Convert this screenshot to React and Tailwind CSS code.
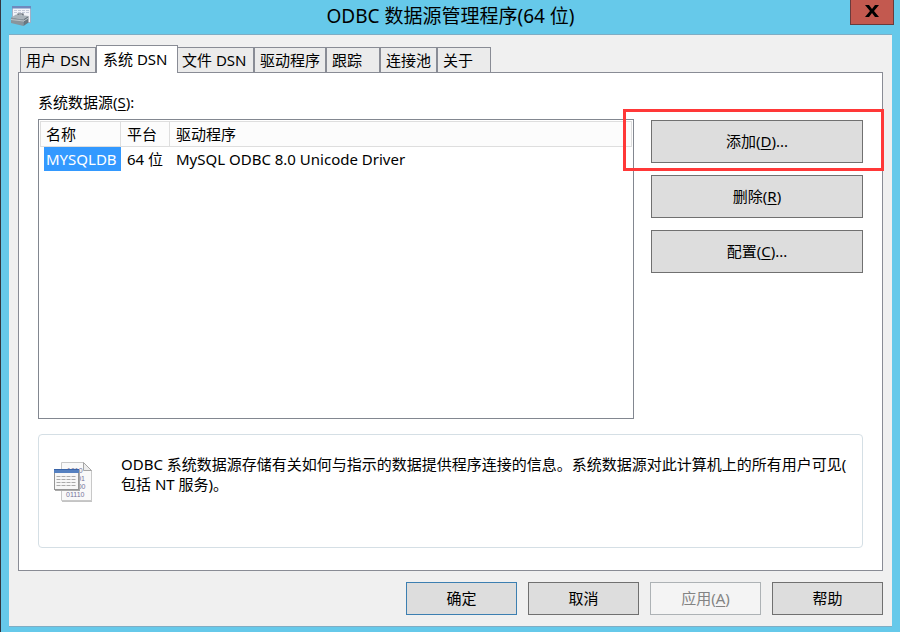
import { Fragment, useState } from "react";

const tabs = [
  { label: "用户 DSN", width: "w-[76px]" },
  { label: "系统 DSN", width: "w-[82px]" },
  { label: "文件 DSN", width: "w-[78px]" },
  { label: "驱动程序", width: "w-[72px]" },
  { label: "跟踪", width: "w-[54px]" },
  { label: "连接池", width: "w-[57px]" },
  { label: "关于", width: "w-[54px]" },
];

const sources = [
  { name: "MYSQLDB", platform: "64 位", driver: "MySQL ODBC 8.0 Unicode Driver" },
];

function ToolboxIcon() {
  return (
    <svg width="22" height="22" viewBox="0 0 22 22" aria-hidden="true">
      <rect x="1.500" y="1.500" width="18" height="16" fill="#f1f3f8" stroke="#9fb0c8" />
      <rect x="1" y="1" width="19" height="2.500" fill="#6f89bd" />
      <path d="M3 5.500h15M3 7.500h15" stroke="#c3cad8" strokeDasharray="3 1" />
      <path d="M7 11V9h5v2" fill="none" stroke="#4b555e" strokeWidth="1.2" />
      <path d="M0 12.500l5-3 12.500 1.500-5 3z" fill="#a9b3ba" />
      <path d="M0 12.500l12.500 1.500v7L0 18z" fill="#89949c" />
      <path d="M12.500 14l5-3v6.500l-5 3.500z" fill="#6a767f" />
      <path d="M0 14.500l12.500 1.500 5-3" fill="none" stroke="#bcc4c9" />
    </svg>
  );
}

function DataFileIcon() {
  return (
    <svg width="40" height="42" viewBox="0 0 40 42" aria-hidden="true" className="shrink-0">
      <path d="M8 2h22l8 8v31H8z" fill="#c4c4c4" />
      <path d="M7.500 1.500h22l8 8v30h-30z" fill="#f9f9f9" stroke="#c8c8c8" />
      <path d="M29.500 1.500v8h8z" fill="#ececec" stroke="#a5a5a5" />
      <g fontFamily="Liberation Sans, sans-serif" fontSize="7" fill="#77739a">
        <text x="13" y="12">1010</text>
        <text x="12" y="20">01101</text>
        <text x="12" y="28">10100</text>
        <text x="12" y="36">01110</text>
      </g>
      <rect x="1" y="9" width="25" height="21" fill="#a9a9a9" />
      <rect x="0.500" y="8.500" width="24" height="20" fill="#f7f7f7" stroke="#959595" />
      <rect x="0" y="8" width="25" height="4" fill="#5580c0" />
      <path d="M0 8.500h25" stroke="#3a64a8" />
      <path
        d="M2.500 15.500h20M2.500 18.500h20M2.500 21.500h20M2.500 24.500h20"
        stroke="#aaa"
        strokeDasharray="4 1"
      />
    </svg>
  );
}

function CloseIcon() {
  return (
    <svg width="14" height="12" viewBox="0 0 14 12" aria-hidden="true">
      <path d="M0 0h4l3 4 3-4h4L9 6l5 6h-4L7 8l-3 4H0l5-6z" fill="#000" />
    </svg>
  );
}

function Caption({ text, accessKey, suffix = "" }) {
  return (
    <Fragment>
      {text}
      {accessKey && (
        <>
          (<span className="underline underline-offset-2">{accessKey}</span>){suffix}
        </>
      )}
    </Fragment>
  );
}

function SideButton(props) {
  return (
    <button className="block h-[43px] w-full border border-[#707070] bg-[#dddddd] pb-0.5">
      <Caption {...props} />
    </button>
  );
}

export default function App() {
  const [active, setActive] = useState(1);

  return (
    <div className="flex min-h-screen flex-col border-l border-[#33363f] bg-[#66c9ea] font-['Noto_Sans','Noto_Sans_CJK_SC',sans-serif] text-[15px] leading-5 text-black">
      <header className="grid h-[34px] grid-cols-[1fr_auto_1fr]">
        <div className="pt-[5px] pl-[10px]">
          <ToolboxIcon />
        </div>
        <h1 className="text-[19px] leading-8">ODBC 数据源管理程序(64 位)</h1>
        <button
          aria-label="关闭"
          className="mr-1.5 flex h-[25px] w-11 items-center justify-center justify-self-end border border-t-0 border-[#693b3c] bg-[#c3594f] pb-0.5"
        >
          <CloseIcon />
        </button>
      </header>

      <main className="mr-2 mb-[5px] ml-2 flex flex-1 flex-col border-y border-[#7fadc4] bg-[#f0f0f0] px-[9px] pt-[10px] pb-[11px]">
        <div role="tablist" className="flex items-end pl-0.5">
          {tabs.map((tab, i) => (
            <button
              key={tab.label}
              role="tab"
              aria-selected={i === active}
              onClick={() => setActive(i)}
              className={`${tab.width} border border-b-0 border-[#898c95] text-left whitespace-nowrap ${
                i === active
                  ? "relative z-10 -mr-0.5 -mb-px h-[28px] bg-white pb-0.5 pl-1.5"
                  : "h-[25px] bg-[#ebebeb] pl-[5px]"
              }`}
            >
              {tab.label}
            </button>
          ))}
        </div>

        <section
          role="tabpanel"
          className="flex flex-1 flex-col border border-[#898c95] bg-white px-[19px] pt-[19px] pb-[22px]"
        >
          <h2 id="sources-label">
            <Caption text="系统数据源" accessKey="S" />:
          </h2>
          <div className="mt-[7px] flex flex-1 gap-[17px]">
            <div className="min-h-48 flex-1 border border-[#828790] p-px">
              <table
                aria-labelledby="sources-label"
                className="w-full table-fixed border-separate border-spacing-0 text-left"
              >
                <thead>
                  <tr className="h-[26px] bg-[#fcfcfc]">
                    <th className="w-[81px] border border-[#dedede] pl-[5px] font-normal">名称</th>
                    <th className="w-[49px] border-y border-r border-[#dedede] pl-1.5 font-normal">平台</th>
                    <th className="border-y border-r border-[#dedede] pl-1.5 font-normal">驱动程序</th>
                  </tr>
                </thead>
                <tbody>
                  {sources.map((s) => (
                    <tr key={s.name} className="h-6 whitespace-nowrap">
                      <td className="pl-1">
                        <div className="h-6 bg-[#3399ff] pl-0.5 leading-6 text-white">{s.name}</div>
                      </td>
                      <td className="pl-1.5">{s.platform}</td>
                      <td className="pl-1.5">{s.driver}</td>
                    </tr>
                  ))}
                </tbody>
              </table>
            </div>
            <div className="flex w-[212px] flex-col gap-3 pt-px">
              <div className="relative">
                <SideButton text="添加" accessKey="D" suffix="..." />
                <div className="pointer-events-none absolute -top-[11px] -right-[21px] -bottom-2 -left-7 border-[3px] border-[#ff3838]" />
              </div>
              <SideButton text="删除" accessKey="R" />
              <SideButton text="配置" accessKey="C" suffix="..." />
            </div>
          </div>

          <div className="mt-[15px] flex min-h-[114px] gap-[27px] rounded border border-[#d5dfe5] pt-[19px] pl-[15px]">
            <div className="pt-[7px]">
              <DataFileIcon />
            </div>
            <p className="whitespace-nowrap">
              ODBC 系统数据源存储有关如何与指示的数据提供程序连接的信息。系统数据源对此计算机上的所有用户可见(
              <br />
              包括 NT 服务)。
            </p>
          </div>
        </section>

        <footer className="mt-[11px] flex justify-end gap-[11px]">
          <button className="h-[33px] w-[111px] border border-[#3c7fb1] bg-[#dddddd] pb-0.5">确定</button>
          <button className="h-[33px] w-[111px] border border-[#707070] bg-[#dddddd] pb-0.5">取消</button>
          <button disabled className="h-[33px] w-[111px] border border-[#adb2b5] bg-[#f4f4f4] pb-0.5 text-[#838383]">
            <Caption text="应用" accessKey="A" />
          </button>
          <button className="h-[33px] w-[111px] border border-[#707070] bg-[#dddddd] pb-0.5">帮助</button>
        </footer>
      </main>
    </div>
  );
}
